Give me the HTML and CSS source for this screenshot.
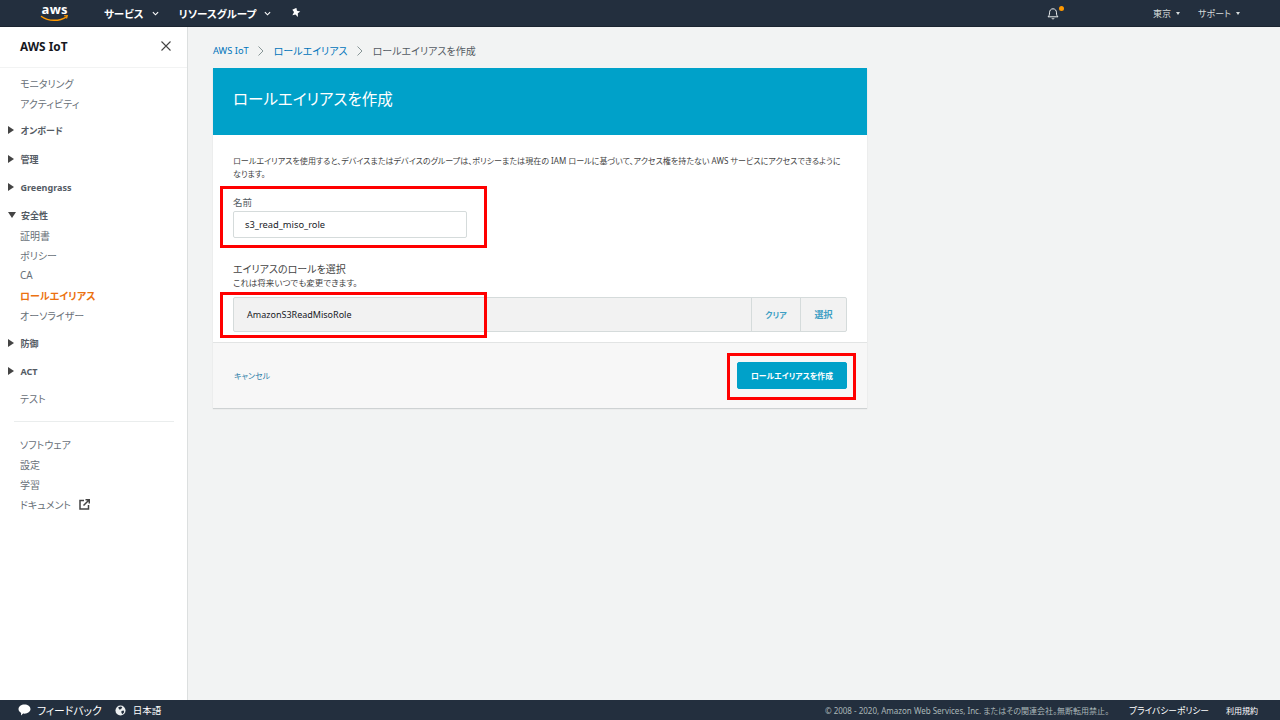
FILE: index.html
```html
<!DOCTYPE html>
<html lang="ja">
<head>
<meta charset="utf-8">
<title>ロールエイリアスを作成</title>
<link rel="stylesheet" href="styles.css">
</head>
<body>
<div class="page">
  <header class="topbar">
    <svg class="logo" viewBox="0 -5 30 26" width="30" height="26">
      <text x="14.500" y="9" text-anchor="middle" textLength="26" class="logo-text">aws</text>
      <path d="M1.500 11.500c7 5 18 5 25 .3" fill="none" stroke="#ff9900" stroke-width="1.400" stroke-linecap="round"/>
      <path d="M24 10.800l3.300-.3-.7 3" fill="none" stroke="#ff9900" stroke-width="1.100"/>
    </svg>
    <nav class="topnav">
      <span class="topitem services">サービス<svg class="chev" viewBox="0 0 8 5" width="7" height="5"><path d="M1 1l3 3 3-3" fill="none" stroke="#fff" stroke-width="1.300"/></svg></span>
      <span class="topitem groups">リソースグループ<svg class="chev" viewBox="0 0 8 5" width="7" height="5"><path d="M1 1l3 3 3-3" fill="none" stroke="#fff" stroke-width="1.300"/></svg></span>
      <svg class="pin" viewBox="0 0 10 10" width="10" height="10"><path transform="rotate(-25 5 5)" d="M3 .5h4.500l-.6 2.800 2.600 2.200-3 .6L5 9.500 3.900 6.100 .8 5.500l2.800-2.200z" fill="#fff"/></svg>
    </nav>
    <div class="topright">
      <span class="bell">
        <svg viewBox="0 0 12 13" width="12" height="13"><path d="M1 9.800c1.200-1 1.500-2 1.500-4 0-2.400 1.400-4 3.500-4s3.500 1.600 3.500 4c0 2 .3 3 1.500 4zM4.800 11.200c.3 1 2.100 1 2.400 0" fill="none" stroke="#eceff0" stroke-width="1"/></svg>
        <i class="dot"></i>
      </span>
      <span class="smallitem tokyo">東京<i class="caret"></i></span>
      <span class="smallitem support">サポート<i class="caret"></i></span>
    </div>
  </header>

  <div class="middle">
    <aside class="sidebar">
      <div class="side-head"><span>AWS IoT</span>
        <svg viewBox="0 0 10 10" width="10" height="10"><path d="M.5.500l9 9M9.500.500l-9 9" stroke="#444" stroke-width="1.100" fill="none"/></svg>
      </div>
      <div class="side-list">
        <a class="link">モニタリング</a>
        <a class="link">アクティビティ</a>
        <a class="group first"><i class="tri"></i>オンボード</a>
        <a class="group"><i class="tri"></i>管理</a>
        <a class="group"><i class="tri"></i>Greengrass</a>
        <a class="group open"><i class="tri down"></i>安全性</a>
        <a class="link">証明書</a>
        <a class="link">ポリシー</a>
        <a class="link">CA</a>
        <a class="link active">ロールエイリアス</a>
        <a class="link">オーソライザー</a>
        <a class="group after-open"><i class="tri"></i>防御</a>
        <a class="group"><i class="tri"></i>ACT</a>
        <a class="link test">テスト</a>
        <hr class="side-rule">
        <a class="link">ソフトウェア</a>
        <a class="link">設定</a>
        <a class="link">学習</a>
        <a class="link">ドキュメント<svg class="ext" viewBox="0 0 11 11" width="11" height="11"><path d="M5 1.500H1v8.500h8.500V6" fill="none" stroke="#444" stroke-width="1.500"/><path d="M4.500 6.500L10 1M6.500 .8h3.800v3.800" fill="none" stroke="#444" stroke-width="1.500"/></svg></a>
      </div>
    </aside>

    <main class="content">
      <div class="crumbs">
        <a class="crumb-root">AWS IoT</a>
        <svg viewBox="0 0 6 10" width="6" height="10"><path d="M.5.500L5 5 .5 9.500" fill="none" stroke="#879596" stroke-width="1"/></svg>
        <a>ロールエイリアス</a>
        <svg viewBox="0 0 6 10" width="6" height="10"><path d="M.5.500L5 5 .5 9.500" fill="none" stroke="#879596" stroke-width="1"/></svg>
        <span>ロールエイリアスを作成</span>
      </div>
      <section class="card">
        <h1 class="banner">ロールエイリアスを作成</h1>
        <div class="card-body">
          <p class="intro">ロールエイリアスを使用すると、デバイスまたはデバイスのグループは、ポリシーまたは現在の IAM ロールに基づいて、アクセス権を持たない AWS サービスにアクセスできるようになります。</p>
          <label class="name-label">名前</label>
          <div class="input">s3_read_miso_role</div>
          <h2 class="role-title">エイリアスのロールを選択</h2>
          <p class="role-sub">これは将来いつでも変更できます。</p>
          <div class="picker">
            <span class="picker-value">AmazonS3ReadMisoRole</span>
            <span class="picker-btn clear">クリア</span>
            <span class="picker-btn choose">選択</span>
          </div>
        </div>
        <div class="card-foot">
          <a class="cancel">キャンセル</a>
          <button class="primary">ロールエイリアスを作成</button>
        </div>
        <i class="mark mark-name"></i>
        <i class="mark mark-role"></i>
        <i class="mark mark-btn"></i>
      </section>
    </main>
  </div>

  <footer class="bottombar">
    <svg class="bubble" viewBox="0 0 13 12" width="13" height="12"><path d="M6.500 .5c3.300 0 6 2 6 4.600s-2.700 4.600-6 4.600c-.5 0-1 0-1.400-.1L3 11.500l.1-2.600C1.500 8 .5 6.700.5 5.100.5 2.500 3.200.5 6.500.5z" fill="#fff"/></svg>
    <span class="fb">フィードバック</span>
    <svg class="globe" viewBox="0 0 12 12" width="11" height="11"><circle cx="6" cy="6" r="5.500" fill="#eceff0"/><path d="M3.500 2.500l3-1 1.500 1-1.500 2-2 .5zM7 6.500l2.500-.5.5 2-2 2-1-1.500z" fill="#232f3e"/></svg>
    <span class="lang">日本語</span>
    <span class="copy">© 2008 - 2020, Amazon Web Services, Inc. またはその関連会社。無断転用禁止。</span>
    <span class="legal privacy">プライバシーポリシー</span>
    <span class="legal terms">利用規約</span>
  </footer>
</div>
</body>
</html>
```
FILE: styles.css
```css
* { box-sizing: border-box; }
html, body { margin: 0; height: 100%; }
body {
  font-family: "Noto Sans", "Noto Sans CJK JP", sans-serif;
  font-feature-settings: "palt";
  font-size: 10px;
  color: #444;
  background: #f2f3f3;
  overflow: hidden;
}
.page { width: 1280px; height: 720px; display: flex; flex-direction: column; }

.topbar {
  height: 27px;
  flex: none;
  background: #232f3e;
  border-bottom: 1px solid #1b2430;
  display: flex;
  align-items: center;
  color: #fff;
  font-weight: 700;
}
.logo { margin-left: 40px; flex: none; }
.logo-text { font: 700 13px "Open Sans", sans-serif; fill: #fff; }
.topnav { display: flex; align-items: center; margin-left: 34px; font-size: 10.500px; }
.topitem { display: flex; align-items: center; }
.chev { margin-left: 8px; }
.groups { margin-left: 20px; }
.pin { margin-left: 20px; }
.topright { margin-left: auto; display: flex; align-items: center; font-weight: 400; font-size: 9px; color: #d5dbdb; }
.bell { position: relative; display: flex; margin-right: 94px; }
.dot { position: absolute; left: 12px; top: -1px; width: 5px; height: 5px; border-radius: 50%; background: #ff9900; }
.smallitem { display: flex; align-items: center; }
.support { margin-left: 18px; margin-right: 40px; }
.caret {
  margin-left: 5px;
  width: 0; height: 0;
  border-left: 2.500px solid transparent;
  border-right: 2.500px solid transparent;
  border-top: 3px solid #d5dbdb;
}

.middle { flex: 1; display: flex; min-height: 0; }
.sidebar {
  width: 188px;
  flex: none;
  background: #fff;
  border-right: 1px solid #dcdfdf;
}
.side-head {
  height: 41px;
  display: flex;
  align-items: center;
  justify-content: space-between;
  padding: 0 16px 2px 20px;
  border-bottom: 1px solid #f2f3f3;
  font-size: 11.800px;
  font-weight: 700;
  color: #16191f;
}
.side-list { display: flex; flex-direction: column; padding-top: 5px; }
.link { display: flex; align-items: center; height: 20px; padding-left: 20px; color: #687078; font-size: 10px; }
.link.active { color: #ec7211; font-weight: 700; }
.link.test { margin-top: 3px; }
.group {
  display: flex;
  align-items: center;
  height: 28px;
  padding-left: 8px;
  color: #545b64;
  font-weight: 700;
  font-size: 9px;
}
.group.first { margin-top: 3px; margin-bottom: 1px; }
.group.open { margin-bottom: -4px; }
.group.after-open { margin-top: 4px; }
.tri {
  width: 0; height: 0;
  margin-right: 6.500px;
  border-top: 4px solid transparent;
  border-bottom: 4px solid transparent;
  border-left: 6px solid #444;
}
.tri.down {
  margin-right: 5px;
  border-left: 4px solid transparent;
  border-right: 4px solid transparent;
  border-top: 6px solid #444;
  border-bottom: 0;
}
.side-rule { border: 0; border-top: 1px solid #eaeded; width: 160px; margin: 13px 0 12px 14px; }
.ext { margin-left: 8px; }

.content { flex: 1; padding: 0 0 0 25px; min-width: 0; }
.crumbs {
  height: 41px;
  padding-top: 6px;
  display: flex;
  align-items: center;
  gap: 9.500px;
  font-size: 10px;
  color: #545b64;
}
.crumbs a { color: #0073bb; }
.crumbs .crumb-root { font-size: 9.300px; }
.card {
  position: relative;
  width: 654px;
  background: #fff;
  box-shadow: 0 1px 1px rgba(0,28,36,.15);
}
.banner {
  margin: 0;
  height: 67px;
  padding: 0 20px 6px;
  display: flex;
  align-items: center;
  background: #00a1c9;
  color: #fff;
  font-size: 15.500px;
  font-weight: 400;
}
.card-body { height: 208px; padding: 19px 20px 0; border-bottom: 1px solid #e2e4e4; }
.intro { margin: 0; font-size: 8.050px; line-height: 13px; color: #444; width: 614px; }
.name-label { display: block; margin-top: 16px; font-size: 9.500px; line-height: 14px; color: #545b64; }
.input {
  width: 234px;
  height: 27px;
  margin-top: 1px;
  padding-left: 11px;
  display: flex;
  align-items: center;
  border: 1px solid #d5dbdb;
  border-radius: 2px;
  color: #16191f;
  font-size: 9.300px;
}
.role-title { margin: 24px 0 0; font-size: 10px; line-height: 14px; font-weight: 400; color: #444; }
.role-sub { margin: 0; font-size: 8.500px; line-height: 13px; color: #444; }
.picker {
  margin-top: 8px;
  width: 614px;
  height: 35px;
  display: flex;
  border: 1px solid #d5dbdb;
  border-radius: 2px;
  background: #f2f2f2;
  align-items: stretch;
  font-size: 9px;
}
.picker-value { flex: 1; display: flex; align-items: center; padding-left: 13px; color: #16191f; }
.picker-btn {
  display: flex;
  align-items: center;
  justify-content: center;
  border-left: 1px solid #d5dbdb;
  color: #3f9fc4;
  font-weight: 700;
}
.clear { width: 49px; font-size: 8px; }
.choose { width: 46px; font-size: 9px; }
.card-foot {
  height: 65px;
  background: #f7f7f7;
  padding: 0 20px 0 21px;
  display: flex;
  align-items: center;
  justify-content: space-between;
}
.cancel { color: #2f7fa8; font-size: 8px; }
.primary {
  width: 110px;
  height: 27px;
  border: 1px solid #00a1c9;
  border-radius: 2px;
  background: #00a1c9;
  color: #fff;
  font: 700 7.800px "Noto Sans", "Noto Sans CJK JP", sans-serif;
  font-feature-settings: "palt";
  padding: 0;
}
.mark { position: absolute; border: 3px solid #f00; }
.mark-name { left: 7px; top: 118px; width: 267px; height: 62px; }
.mark-role { left: 7px; top: 224px; width: 267px; height: 46px; }
.mark-btn { left: 514px; top: 285px; width: 129px; height: 47px; }

.bottombar {
  height: 20px;
  flex: none;
  background: #232f3e;
  display: flex;
  align-items: center;
  color: #fff;
  font-size: 9.500px;
}
.bubble { margin-left: 18px; }
.fb { margin-left: 6px; font-size: 10.800px; }
.globe { margin-left: 13px; }
.lang { margin-left: 7px; }
.copy { margin-left: auto; font-size: 8px; color: #aab7b8; }
.legal { font-size: 8.700px; }
.privacy { margin-left: 20px; }
.legal.terms { font-size: 8px; margin-left: 17px; margin-right: 22px; }
```
